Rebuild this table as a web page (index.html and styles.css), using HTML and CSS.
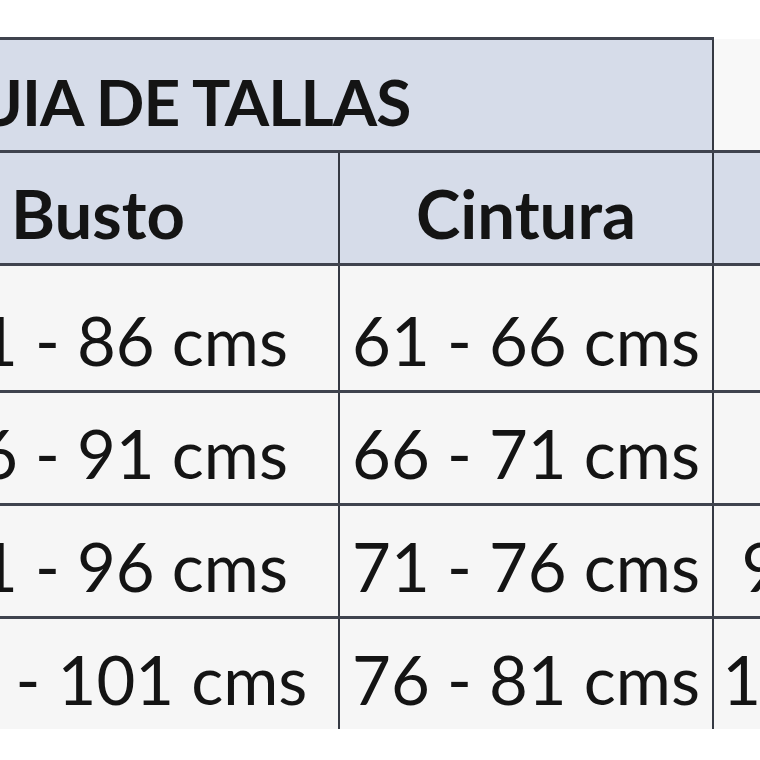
FILE: index.html
```html
<!DOCTYPE html>
<html lang="es">
<head>
<meta charset="utf-8">
<title>Guía de tallas</title>
<link rel="stylesheet" href="styles.css">
</head>
<body>
<div class="viewport">
  <table class="sizes">
    <colgroup><col class="c1"><col class="c2"><col class="c3"></colgroup>
    <tr class="row-title">
      <th colspan="2" class="title-cell">GUIA DE TALLAS</th>
      <td class="blank"></td>
    </tr>
    <tr class="row-head">
      <th class="busto">Busto</th>
      <th>Cintura</th>
      <th>Cadera</th>
    </tr>
    <tr class="row-1">
      <td>81 - 86 cms</td><td>61 - 66 cms</td><td>86 - 91 cms</td>
    </tr>
    <tr class="row-n">
      <td>86 - 91 cms</td><td>66 - 71 cms</td><td>91 - 96 cms</td>
    </tr>
    <tr class="row-n">
      <td>91 - 96 cms</td><td>71 - 76 cms</td><td>96 - 101 cms</td>
    </tr>
    <tr class="row-n row-last">
      <td>96 - 101 cms</td><td>76 - 81 cms</td><td>101 - 106 cms</td>
    </tr>
  </table>
</div>
</body>
</html>
```

FILE: styles.css
```css
html, body {
  margin: 0;
  background: #ffffff;
}
body {
  width: 760px;
  height: 760px;
  overflow: hidden;
}
.viewport {
  width: 760px;
  height: 760px;
  overflow: hidden;
  padding-top: 37px;
  box-sizing: border-box;
}
.sizes {
  border-collapse: collapse;
  table-layout: fixed;
  width: 1268px;
  margin-left: -112px;
  font-family: Lato, "Open Sans", sans-serif;
  font-size: 67px;
  color: #141414;
}
.c1 { width: 450px; }
.c2 { width: 374px; }
.c3 { width: 444px; }
.sizes th,
.sizes td {
  padding: 0 0 16px;
  line-height: 1;
  vertical-align: bottom;
  text-align: center;
  white-space: nowrap;
  overflow: hidden;
  border-left: 2px solid #353943;
  border-right: 2px solid #353943;
  border-top: 3px solid #3f434e;
  border-bottom: 3px solid #3f434e;
  background: #f6f6f6;
  font-weight: 400;
}
.row-title th,
.row-title td { height: 94px; }
.row-head th,
.row-head td { height: 94px; }
.row-1 td { height: 108px; }
.row-n td { height: 94px; }
.row-last td { border-bottom: none; }
.sizes th { font-weight: 700; background: #d6dce9; }
.title-cell {
  text-align: left !important;
  padding-left: 40px !important;
  font-size: 64px;
  letter-spacing: -1px;
}
.row-title .blank { background: #f8f8f8; border-top: none; }
.busto { padding-right: 32px !important; }
```
